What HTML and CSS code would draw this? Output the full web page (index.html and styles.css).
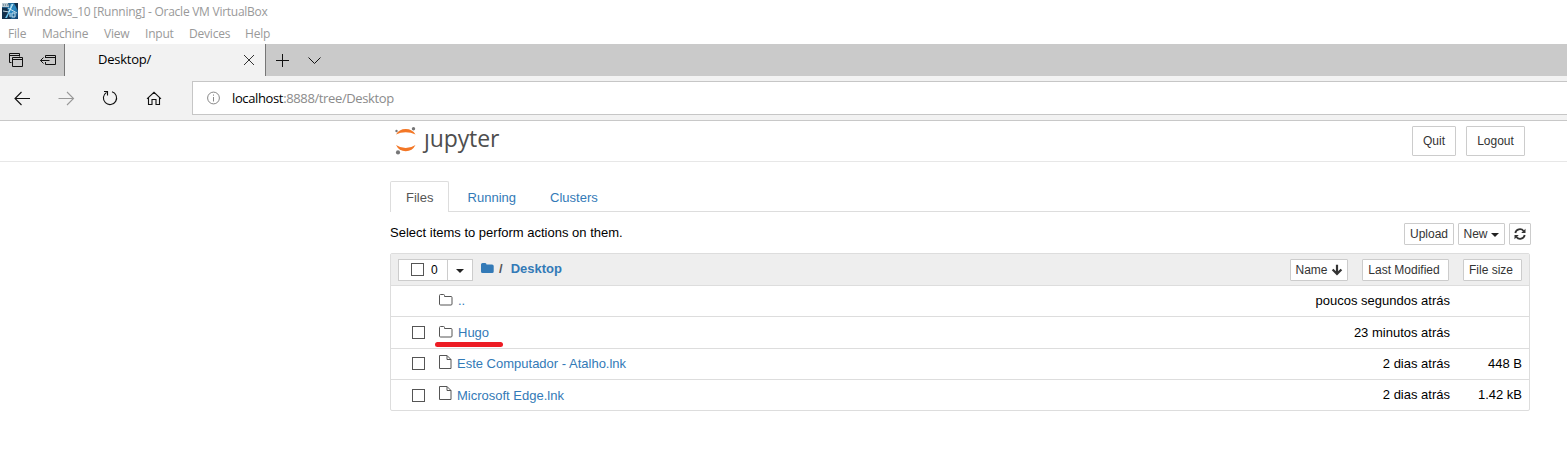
FILE: index.html
```html
<!DOCTYPE html>
<html lang="en">
<head>
<meta charset="utf-8">
<title>Desktop/</title>
<link rel="stylesheet" href="styles.css">
</head>
<body>
<div class="titlebar">
  <svg class="vm-icon" width="16" height="16" viewBox="0 0 16 16"><defs><linearGradient id="vm" x1="0" y1="0" x2="1" y2="1"><stop offset="0" stop-color="#1c405f"/><stop offset=".55" stop-color="#2a8dc8"/><stop offset="1" stop-color="#143c66"/></linearGradient></defs><path fill="url(#vm)" d="M0 0h16v16H0z"/><path fill="#b9c9d2" d="M0 0h6l1 4H0z"/><path stroke="#4e6878" d="M1 2h1m1 0h1m1 0h1"/><path fill="#12304c" d="M0 5h5l4 11H0zM12 0h4v8z"/><path fill="#70c7f0" d="M9 1l2 0-3 7-3 7-2 0 4-7z"/><path fill="none" stroke="#d8edf6" stroke-width=".9" d="M6 5l9 5M1 8l6 1 4-8M8 10v4M10 10h3v4h-3z"/></svg>
  <span class="ui title-text">Windows_10 [Running] - Oracle VM VirtualBox</span>
</div>
<nav class="menubar ui">
  <span class="m-file">File</span><span class="m-machine">Machine</span><span class="m-view">View</span><span class="m-input">Input</span><span class="m-devices">Devices</span><span class="m-help">Help</span>
</nav>
<div class="tabstrip">
  <div class="tab-tools">
    <svg width="64" height="32" viewBox="0 0 64 32" fill="none" stroke="#111"><path d="M11.500 18.500h-2v-9h10v3M9.500 11.500h10M12.500 13.500h10v9h-10zM12.500 15.500h10"/><path d="M45.500 14v-2.500h10v9h-10v-2.500M45.500 13.500h10M40.500 16.500h9M43.500 13.500l-3 3 3 3"/></svg>
  </div>
  <div class="browser-tab">
    <span class="ui tab-title">Desktop/</span>
    <svg width="12" height="12" viewBox="0 0 12 12" fill="none" stroke="#333"><path d="M1 1l10 10M11 1L1 11"/></svg>
  </div>
  <svg class="tab-new" width="60" height="32" viewBox="0 0 60 32" fill="none" stroke="#111"><path d="M10 16.500h13M16.500 10v13M42.500 13.500l6 6 6-6"/></svg>
</div>
<div class="navbar">
  <svg class="nav-icons" width="192" height="44" viewBox="0 0 192 44" fill="none" stroke="#111" stroke-width="1.100"><path d="M15 22.500h15M21.500 16l-6.500 6.500 6.500 6.500"/><path stroke="#999" d="M58.500 22.500h15M67 16l6.500 6.500-6.500 6.500"/><path d="M112 15.700a6.600 6.600 0 1 1-5.500.7M104 15.500h3.500v4"/><path d="M147 22.800l7-6.500 7 6.500M148.500 21.500v7h3.500v-5h4v5h3.500v-7"/></svg>
  <div class="address">
    <svg width="14" height="14" viewBox="0 0 14 14" fill="none" stroke="#888"><circle cx="6.500" cy="7" r="5.900"/><path d="M6.500 6v4.500M6.500 3.500v1.200"/></svg>
    <span class="ui url"><span class="host">localhost</span><span class="path">:8888/tree/Desktop</span></span>
  </div>
</div>
<header class="jheader">
  <div class="logo">
    <svg width="28" height="34" viewBox="0 0 28 34"><path fill="#f37726" d="M6 11.500Q9 6 15.700 6T25.500 11.500Q21 9.200 15.700 9.200T6 11.500zM6 22Q9 28.200 15.700 28.200T25.500 22Q21 25 15.700 25T6 22z"/><g fill="#767677"><circle cx="23.500" cy="5.700" r="1.700"/><circle cx="6.500" cy="8" r="1.200"/><circle cx="8" cy="29.400" r="2.100"/></g></svg>
    <span class="wordmark"><span class="dotless">j</span>upyter</span>
  </div>
  <div class="session"><button class="btn quit">Quit</button><button class="btn logout">Logout</button></div>
</header>
<main class="content">
  <div class="tabs"><a class="tab active">Files</a><a class="tab running">Running</a><a class="tab clusters">Clusters</a></div>
  <div class="toolbar">
    <span class="hint">Select items to perform actions on them.</span>
    <div class="actions">
      <button class="btn upload">Upload</button>
      <button class="btn new">New<span class="caret"></span></button>
      <button class="btn refresh"><svg width="12" height="12" viewBox="0 0 12 12" fill="none" stroke="#333" stroke-width="1.800"><path d="M1.300 5A4.700 4.700 0 0 1 9.600 3M10.700 7A4.700 4.700 0 0 1 2.400 9"/><path fill="#333" stroke="none" d="M11.500.7V5H7.200zM.5 11.300V7h4.300z"/></svg></button>
    </div>
  </div>
  <div class="list">
    <div class="list-head">
      <div class="selector"><span class="select-all"><i class="check"></i>0</span><span class="select-menu"><span class="caret"></span></span></div>
      <svg class="crumb-icon" width="13" height="12" viewBox="0 0 13 12"><path fill="#337ab7" d="M0 2.500Q0 1 1.500 1h2.700Q5.500 1 5.500 2.500H11q1.700 0 1.700 1.500v5.500q0 1.500-1.500 1.500H1.500Q0 11 0 9.500z"/></svg>
      <span class="slash">/</span><a class="crumb">Desktop</a>
      <div class="sorts"><button class="btn s-name">Name<svg width="12" height="12" viewBox="0 0 12 12" fill="none" stroke="#333" stroke-width="2.200"><path d="M6 .8v9M1.600 5.500L6 9.900l4.400-4.400"/></svg></button><button class="btn s-mod">Last Modified</button><button class="btn s-size">File size</button></div>
    </div>
    <div class="row r1"><i class="check hidden"></i><svg class="folder" width="14" height="12" viewBox="0 0 14 12"><path d="M.5 10V1.500Q.5.500 1.500.500h3q1 0 1 1v1h6.500q1 0 1 1V10q0 1-1 1H1.500q-1 0-1-1z"/></svg><a class="name">..</a><span class="time">poucos segundos atrás</span><span class="size"></span></div>
    <div class="row r2"><i class="check"></i><svg class="folder" width="14" height="12" viewBox="0 0 14 12"><path d="M.5 10V1.500Q.5.500 1.500.500h3q1 0 1 1v1h6.500q1 0 1 1V10q0 1-1 1H1.500q-1 0-1-1z"/></svg><a class="name">Hugo</a><svg class="marker" width="70" height="7" viewBox="0 0 70 7"><path d="M2.500 3.500h63" stroke="#ed1c24" stroke-width="5" stroke-linecap="round"/></svg><span class="time">23 minutos atrás</span><span class="size"></span></div>
    <div class="row r3"><i class="check"></i><svg class="file" width="13" height="14" viewBox="0 0 13 14"><path d="M.5.500h7.500l4 4v9H.5zM8 .5v4h4"/></svg><a class="name fname">Este Computador - Atalho.lnk</a><span class="time">2 dias atrás</span><span class="size">448 B</span></div>
    <div class="row r4"><i class="check"></i><svg class="file" width="13" height="14" viewBox="0 0 13 14"><path d="M.5.500h7.500l4 4v9H.5zM8 .5v4h4"/></svg><a class="name fname">Microsoft Edge.lnk</a><span class="time">2 dias atrás</span><span class="size">1.42 kB</span></div>
  </div>
</main>
</body>
</html>
```
FILE: styles.css
```css
* { box-sizing: border-box; }
body { margin: 0; height: 476px; overflow: hidden; background: #fff; color: #000; font: 13px/20px "Liberation Sans", Arial, sans-serif; }
svg { display: block; flex: none; }
.ui { font-family: "Open Sans", "Noto Sans", sans-serif; white-space: nowrap; }
.titlebar { display: flex; height: 24px; padding-left: 2px; align-items: center; color: #999; }
.vm-icon { margin-bottom: 2px; }
.title-text { margin-left: 5px; font-size: 12px; letter-spacing: -0.26px; }
.menubar { display: grid; grid-template-columns: 34px 62px 41px 44px 56px 60px; height: 20px; padding-left: 8px; color: #999; font-size: 12px; line-height: 20px; letter-spacing: -0.2px; }
.tabstrip { display: flex; height: 32px; background: #cacaca; }
.tab-tools { width: 65px; border-right: 1px solid #777; }
.browser-tab { display: flex; width: 201px; padding: 0 10px 0 33px; justify-content: space-between; align-items: center; background: #f2f2f2; border-right: 1px solid #777; }
.tab-title { margin-bottom: 2px; font-size: 13px; letter-spacing: -0.25px; color: #000; }
.navbar { display: flex; height: 45px; background: #f2f2f2; border-bottom: 1px solid #c8c8c8; }
.address { display: flex; flex: 1; height: 34px; margin-top: 5px; padding-left: 14px; align-items: center; gap: 11px; background: #fff; border: 1px solid #c6c6c6; border-right: 0; }
.url { font-size: 13px; letter-spacing: -0.37px; }
.host { color: #000; }
.path { color: #8b8b8b; }
.jheader { display: flex; height: 41px; padding: 0 42px 0 390px; justify-content: space-between; border-bottom: 1px solid #e7e7e7; }
.logo { display: flex; padding-top: 2px; }
.wordmark { margin-left: 6px; color: #4e4e4e; font: 23px/31px "Open Sans", "Noto Sans", sans-serif; letter-spacing: -0.1px; }
.dotless { display: inline-block; clip-path: inset(11px -6px -6px -6px); }
.btn { padding: 0; border: 1px solid #ccc; border-radius: 1px; background: #fff; color: #333; font: 12px/18px "Liberation Sans", Arial, sans-serif; height: 22px; display: flex; align-items: center; justify-content: center; }
.session { display: flex; gap: 10px; padding-top: 5px; }
.session .btn { height: 30px; }
.quit { width: 44px; }
.logout { width: 59px; }
.content { width: 1141px; margin: 19px 0 0 390px; }
.tabs { display: flex; width: 1140px; height: 31px; border-bottom: 1px solid #ddd; }
.tab { color: #337ab7; line-height: 34px; padding-left: 18.6px; }
.tab.active { width: 59px; height: 31px; line-height: 32px; padding-left: 15px; color: #555; background: #fff; border: 1px solid #ddd; border-bottom: 0; border-radius: 2px 2px 0 0; }
.tab.clusters { padding-left: 34px; }
.toolbar { display: flex; height: 41px; justify-content: space-between; padding-top: 11px; }
.hint { line-height: 20px; }
.actions { display: flex; gap: 4px; }
.upload { width: 50px; }
.new { width: 47px; gap: 3px; padding-right: 1px; }
.refresh { width: 22px; }
.caret { border: 4px solid transparent; border-top-color: #222; border-bottom: 0; }
.new .caret { margin-top: 1px; }
.list { width: 1140px; height: 158px; border: 1px solid #ddd; border-radius: 2px; }
.list-head { display: flex; height: 32px; padding-left: 7px; align-items: center; background: #eee; border-bottom: 1px solid #ddd; }
.selector { display: flex; width: 75px; height: 22px; background: #fff; border: 1px solid #ccc; }
.select-all { display: flex; width: 49px; padding-left: 12px; gap: 7px; align-items: center; border-right: 1px solid #ccc; font-size: 12px; }
.select-menu { display: flex; flex: 1; padding-top: 2px; align-items: center; justify-content: center; }
.check { flex: none; width: 13px; height: 13px; border: 1px solid #555; background: #fff; }
.hidden { visibility: hidden; }
.crumb-icon { margin: 0 0 3px 8px; }
.slash { margin: 0 8px 2px 5px; font-weight: bold; color: #555; }
.crumb { margin-bottom: 2px; color: #337ab7; font-weight: bold; }
.sorts { display: flex; gap: 14px; margin: 0 7px 0 auto; }
.s-name { width: 58px; gap: 3px; }
.s-mod { width: 87px; padding-right: 3px; }
.s-size { width: 59px; padding-right: 3px; }
.row { position: relative; display: flex; align-items: center; padding: 0 7px 0 21px; border-bottom: 1px solid #ddd; height: 31px; }
.r2 { height: 32px; }
.r3 .check { margin-bottom: 2px; }
.r4 { height: 30px; border-bottom: 0; }
.r4 .fname { padding-top: 1px; }
.folder { margin: 0 5px 2px 14px; }
.file { margin: 0 5px 5px 14px; }
.folder path, .file path { fill: none; stroke: #555; }
.name { color: #337ab7; }
.time { margin-left: auto; }
.size { width: 72px; text-align: right; }
.marker { position: absolute; left: 44px; top: 24px; }
```
